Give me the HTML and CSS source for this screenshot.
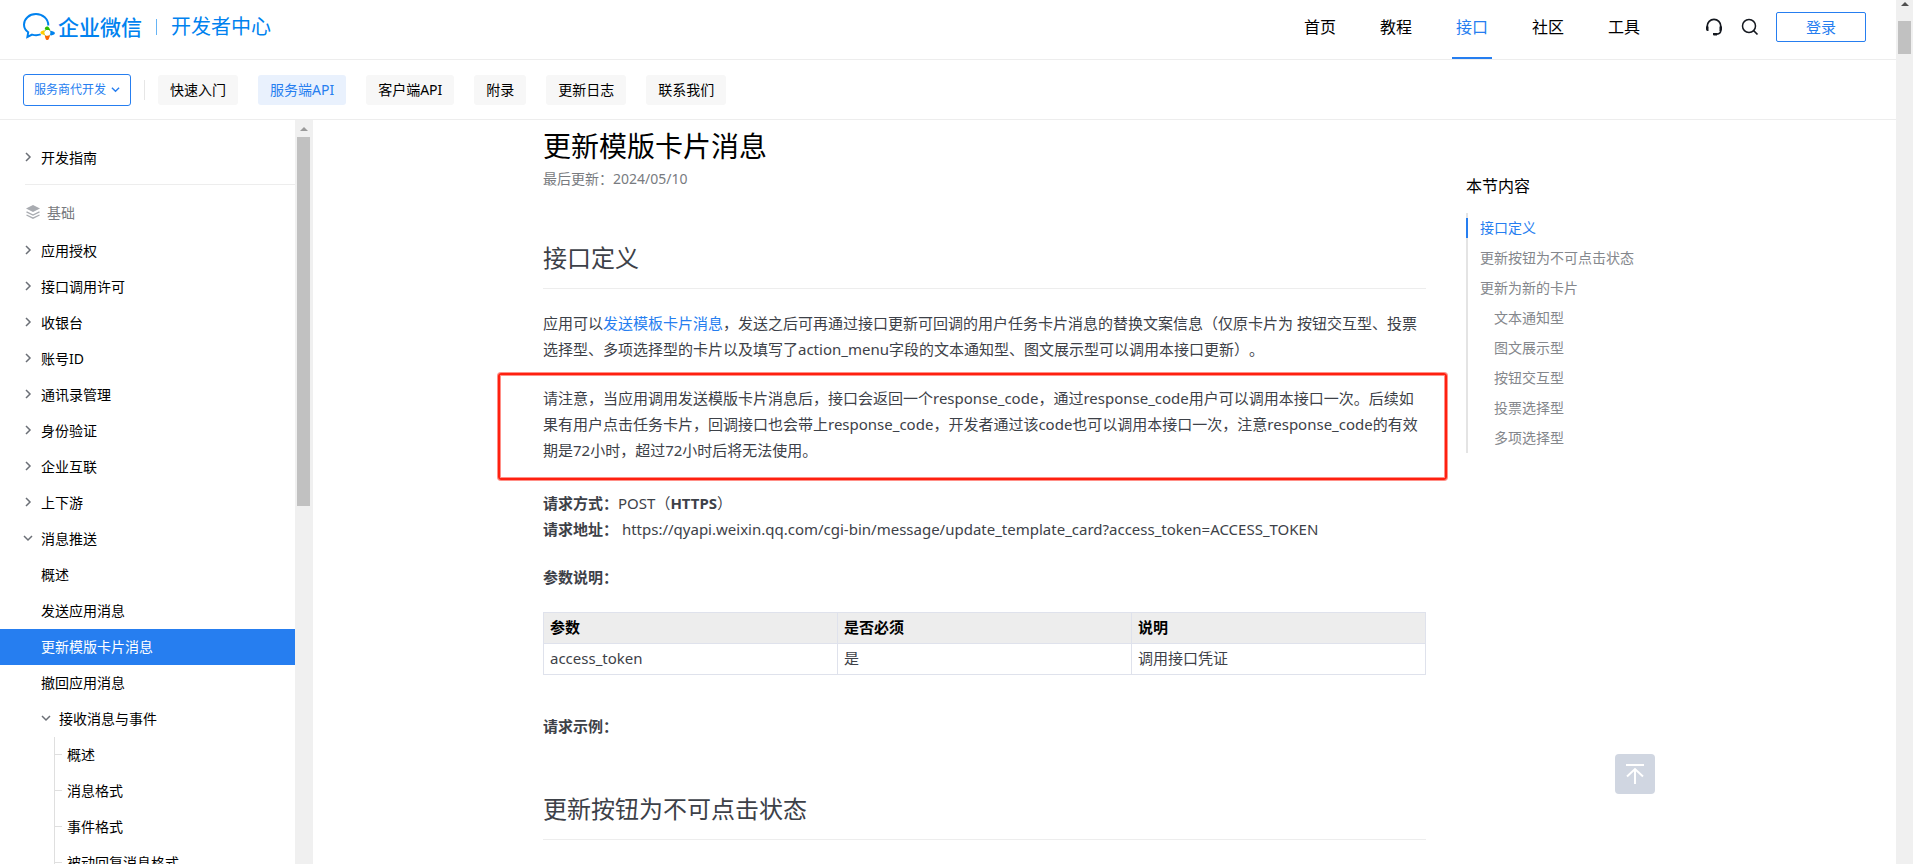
FILE: index.html
```html
<!DOCTYPE html>
<html lang="zh-CN">
<head>
    <meta charset="UTF-8">
    <meta name="viewport" content="width=device-width, initial-scale=1.0">
    <title>更新模版卡片消息 - 企业微信开发者中心</title>
    <link rel="stylesheet" href="styles.css">
</head>
<body>
    <svg class="symbols" aria-hidden="true">
        <symbol id="arrow-right" viewBox="0 0 10 10"><path d="M3 1l4 4-4 4" fill="none" stroke="currentColor" stroke-width="1.5"/></symbol>
        <symbol id="arrow-down" viewBox="0 0 10 10"><path d="M1 3l4 4 4-4" fill="none" stroke="currentColor" stroke-width="1.5"/></symbol>
    </svg>

    <div class="page">
        <header class="header">
            <a href="#" class="logo">
                <svg width="32" height="28" viewBox="0 0 32 28">
                    <path d="M25.3 12.4C25.3 6 19.8 1.1 13 1.1S1 5.8 1 11.5c0 3.4 1.6 6 4.2 7.8L4.400 24l4.700-2.400c3 .8 6 .7 8.600-.2" fill="none" stroke="#0082ef" stroke-width="2"/>
                    <path d="M24.5 15.5l4.5 4.3-4.7 4.7-4.6-4.7z" fill="#fff" stroke="#9dc36b" stroke-width="1"/>
                    <path d="M21.8 16.2c-.2-2.2 1.6-3.3 3.1-2.6 1.4.6 1.5 2.4 2.5 3.6-2-.8-3.6.5-5.6-1z" fill="#2dbc00"/>
                    <path d="M27.5 22.5c-.8-1.6.3-3.2-.2-5.1 1.8 1 4.3.6 4.6 2.6.1 1.8-2.500 2.200-4.400 2.500z" fill="#0082ef"/>
                    <path d="M21.8 22.7c1.8.6 3.5-.6 5.4.1-1.2 1.300-.8 4.100-2.700 4.300-2 .1-2.100-2.700-2.700-4.400z" fill="#fb6500"/>
                    <path d="M21.6 17.1c-.8 1.8.4 3.5.2 5.3-1.600-1-4.100-.7-4.300-2.600 0-1.800 2.500-1.900 4.100-2.700z" fill="#fc0"/>
                </svg>
                <span class="logo-name">企业微信</span>
                <span class="logo-sub">开发者中心</span>
            </a>
            <nav class="nav">
                <a href="#">首页</a>
                <a href="#">教程</a>
                <a href="#" class="active">接口</a>
                <a href="#">社区</a>
                <a href="#">工具</a>
            </nav>
            <div class="tools">
                <button type="button" class="icon-btn" aria-label="客服">
                    <svg width="18" height="18" viewBox="0 0 18 18">
                        <path d="M2.2 10V8.2a6.8 6.8 0 0 1 13.600 0V12c0 2.600-1.300 4-4 4.200" fill="none" stroke="#14181f" stroke-width="1.7"/>
                        <path d="M1 8.500h2.500v4.500H2.600C1.600 13 1 12.200 1 11zM17 8.500h-2.500v4.500h.9c1 0 1.600-.8 1.600-2zM8 15h4v2.400H8.800c-.6 0-.8-.4-.8-.9z" fill="#14181f"/>
                    </svg>
                </button>
                <button type="button" class="icon-btn" aria-label="搜索">
                    <svg width="18" height="18" viewBox="0 0 18 18">
                        <circle cx="8" cy="8" r="6.5" fill="none" stroke="#14181f" stroke-width="1.5"/>
                        <path d="M12.5 12.5l4 4" stroke="#14181f" stroke-width="1.7"/>
                    </svg>
                </button>
                <button type="button" class="login-btn">登录</button>
            </div>
        </header>

        <div class="sub-header">
            <div class="mode">
                <select aria-label="开发模式">
                    <option>服务商代开发</option>
                </select>
                <svg width="9" height="9"><use href="#arrow-down"/></svg>
            </div>
            <nav class="tabs">
                <a href="#">快速入门</a>
                <a href="#" class="active">服务端API</a>
                <a href="#">客户端API</a>
                <a href="#">附录</a>
                <a href="#">更新日志</a>
                <a href="#">联系我们</a>
            </nav>
        </div>

        <div class="body">
            <aside class="sidebar">
                <ul class="menu">
                    <li><a href="#"><svg><use href="#arrow-right"/></svg>开发指南</a></li>
                    <li class="group">
                        <svg width="14" height="14" viewBox="0 0 14 14">
                            <path d="M7 0l7 3.5L7 7 0 3.5z" fill="#a9acb1"/>
                            <path d="M.5 6.8L7 10l6.5-3.2M.5 10L7 13.2 13.5 10" fill="none" stroke="#a9acb1" stroke-width="1.3"/>
                        </svg>
                        基础
                    </li>
                    <li><a href="#"><svg><use href="#arrow-right"/></svg>应用授权</a></li>
                    <li><a href="#"><svg><use href="#arrow-right"/></svg>接口调用许可</a></li>
                    <li><a href="#"><svg><use href="#arrow-right"/></svg>收银台</a></li>
                    <li><a href="#"><svg><use href="#arrow-right"/></svg>账号ID</a></li>
                    <li><a href="#"><svg><use href="#arrow-right"/></svg>通讯录管理</a></li>
                    <li><a href="#"><svg><use href="#arrow-right"/></svg>身份验证</a></li>
                    <li><a href="#"><svg><use href="#arrow-right"/></svg>企业互联</a></li>
                    <li><a href="#"><svg><use href="#arrow-right"/></svg>上下游</a></li>
                    <li>
                        <a href="#"><svg><use href="#arrow-down"/></svg>消息推送</a>
                        <ul class="level2">
                            <li><a href="#">概述</a></li>
                            <li><a href="#">发送应用消息</a></li>
                            <li><a href="#" class="active">更新模版卡片消息</a></li>
                            <li><a href="#">撤回应用消息</a></li>
                            <li>
                                <a href="#"><svg><use href="#arrow-down"/></svg>接收消息与事件</a>
                                <ul class="level3">
                                    <li><a href="#">概述</a></li>
                                    <li><a href="#">消息格式</a></li>
                                    <li><a href="#">事件格式</a></li>
                                    <li><a href="#">被动回复消息格式</a></li>
                                </ul>
                            </li>
                        </ul>
                    </li>
                </ul>
                <div class="scrollbar side-scroll"><div class="thumb"></div></div>
            </aside>

            <main class="main">
                <article class="doc">
                    <h1>更新模版卡片消息</h1>
                    <div class="date">最后更新：2024/05/10</div>

                    <h2>接口定义</h2>
                    <p>应用可以<a href="#">发送模板卡片消息</a>，发送之后可再通过接口更新可回调的用户任务卡片消息的替换文案信息（仅原卡片为 按钮交互型、投票选择型、多项选择型的卡片以及填写了action_menu字段的文本通知型、图文展示型可以调用本接口更新）。</p>
                    <p class="mark">请注意，当应用调用发送模版卡片消息后，接口会返回一个response_code，通过response_code用户可以调用本接口一次。后续如果有用户点击任务卡片，回调接口也会带上response_code，开发者通过该code也可以调用本接口一次，注意response_code的有效期是72小时，超过72小时后将无法使用。</p>
                    <p><b>请求方式：</b>POST（<b>HTTPS</b>）<br>
                    <b>请求地址：</b> https://qyapi.weixin.qq.com/cgi-bin/message/update_template_card?access_token=ACCESS_TOKEN</p>
                    <p><b>参数说明：</b></p>
                    <table>
                        <thead>
                            <tr>
                                <th>参数</th>
                                <th>是否必须</th>
                                <th>说明</th>
                            </tr>
                        </thead>
                        <tbody>
                            <tr>
                                <td>access_token</td>
                                <td>是</td>
                                <td>调用接口凭证</td>
                            </tr>
                        </tbody>
                    </table>
                    <p><b>请求示例：</b></p>

                    <h2>更新按钮为不可点击状态</h2>
                </article>

                <aside class="toc">
                    <h3>本节内容</h3>
                    <ul>
                        <li><a href="#" class="active">接口定义</a></li>
                        <li><a href="#">更新按钮为不可点击状态</a></li>
                        <li><a href="#">更新为新的卡片</a></li>
                        <li class="sub"><a href="#">文本通知型</a></li>
                        <li class="sub"><a href="#">图文展示型</a></li>
                        <li class="sub"><a href="#">按钮交互型</a></li>
                        <li class="sub"><a href="#">投票选择型</a></li>
                        <li class="sub"><a href="#">多项选择型</a></li>
                    </ul>
                </aside>
            </main>
        </div>
    </div>

    <div class="scrollbar page-scroll"><div class="thumb"></div></div>

    <button type="button" class="back-top" aria-label="返回顶部">
        <svg width="18" height="20" viewBox="0 0 18 20">
            <path d="M0 1h18M9 20V5M1 12.5l8-7.5 8 7.5" fill="none" stroke="#fff" stroke-width="2"/>
        </svg>
    </button>
</body>
</html>
```
FILE: styles.css
```css
* {
    box-sizing: border-box;
}

body {
    margin: 0;
    height: 100vh;
    display: flex;
    overflow: hidden;
    background: #fff;
    color: #000;
    font-family: "Noto Sans", "Noto Sans CJK SC", sans-serif;
    font-size: 14px;
    text-spacing-trim: space-all;
}

a {
    color: inherit;
    text-decoration: none;
}

ul {
    list-style: none;
    margin: 0;
    padding: 0;
}

h1, h2, h3 {
    margin: 0;
    font-weight: normal;
}

button, select {
    font-family: inherit;
    cursor: pointer;
}

.symbols {
    display: none;
}

.page {
    flex: 1;
    min-width: 0;
    display: flex;
    flex-direction: column;
}

/* header */
.header {
    display: flex;
    align-items: center;
    flex: none;
    height: 60px;
    padding: 0 30px 0 23px;
    border-bottom: 1px solid #ededed;
}

.logo {
    display: flex;
    align-items: center;
    color: #0082ef;
    line-height: 24px;
    margin-top: -5px;
}

.logo-name {
    margin-left: 3px;
    font-size: 21px;
    font-weight: 500;
}

.logo-sub {
    display: flex;
    align-items: center;
    font-size: 20px;
}

.logo-sub::before {
    content: "";
    width: 1px;
    height: 16px;
    margin: 0 14px;
    background: #66b4f5;
}

.nav {
    display: flex;
    gap: 36px;
    margin-left: auto;
    margin-right: 61px;
}

.nav a {
    height: 59px;
    padding: 0 4px;
    font-size: 16px;
    line-height: 54px;
}

.nav a.active {
    color: #267ef0;
    border-bottom: 2px solid #267ef0;
}

.tools {
    display: flex;
    align-items: center;
    gap: 18px;
    margin-top: -5px;
}

.icon-btn {
    display: flex;
    padding: 0;
    border: none;
    background: none;
}

.login-btn {
    width: 90px;
    height: 30px;
    margin-left: -1px;
    padding: 0 0 2px;
    border: 1px solid #267ef0;
    border-radius: 2px;
    background: #fff;
    color: #267ef0;
    font-size: 15px;
}

/* second bar */
.sub-header {
    display: flex;
    align-items: center;
    flex: none;
    height: 60px;
    padding-left: 23px;
    border-bottom: 1px solid #ededed;
}

.mode {
    position: relative;
}

.mode select {
    appearance: none;
    display: block;
    width: 108px;
    height: 32px;
    padding: 0 10px;
    border: 1px solid #267ef0;
    border-radius: 3px;
    background: #fff;
    color: #267ef0;
    font-size: 12px;
}

.mode svg {
    position: absolute;
    right: 11px;
    top: 11px;
    color: #267ef0;
    pointer-events: none;
}

.tabs {
    display: flex;
    align-items: center;
    gap: 20px;
}

.tabs::before {
    content: "";
    width: 1px;
    height: 20px;
    margin: 0 -7px 0 13px;
    background: #e6e6e6;
}

.tabs a {
    padding: 0 12px;
    line-height: 30px;
    border-radius: 3px;
    background: #f7f7f7;
}

.tabs a.active {
    background: #e9f1fd;
    color: #267ef0;
}

.body {
    flex: 1;
    min-height: 0;
    display: flex;
}

/* sidebar */
.sidebar {
    flex: none;
    display: flex;
    width: 313px;
    overflow: hidden;
}

.menu {
    flex: 1;
    padding-top: 20px;
}

.menu a {
    display: flex;
    align-items: center;
    height: 36px;
    padding: 0 0 2px 23px;
}

.menu a svg {
    width: 10px;
    height: 10px;
    margin-right: 8px;
    color: #6b6f76;
}

.menu .group {
    display: flex;
    align-items: center;
    gap: 7px;
    height: 49px;
    margin: 8px 0 0 25px;
    padding: 6px 0 0 1px;
    border-top: 1px solid #ededed;
    color: #787b80;
}

.menu .level2 a {
    padding-left: 41px;
}

.menu .level2 a.active {
    background: #267ef0;
    color: #fff;
}

.menu .level3 {
    margin-left: 54px;
    border-left: 1px solid #dfdfdf;
}

.menu .level3 a {
    padding-left: 0;
}

.menu .level3 a::before {
    content: "";
    width: 7px;
    height: 1px;
    margin-right: 5px;
    background: #dfdfdf;
}

/* scroll bars */
.scrollbar {
    flex: none;
    background: #f0f0f0;
}

.scrollbar::before {
    content: "";
    display: block;
    width: 0;
    margin: 0 auto;
    border: 4px solid transparent;
    border-top: none;
    border-bottom-color: #9a9a9a;
}

.scrollbar .thumb {
    width: 13px;
    margin: 6px auto 0;
    background: #c1c1c1;
}

.side-scroll {
    width: 18px;
    padding: 7px 1px 0 0;
}

.side-scroll .thumb {
    height: 50%;
}

.page-scroll {
    width: 17px;
    padding-top: 2px;
}

.page-scroll::before {
    border-bottom-color: #505050;
}

.page-scroll .thumb {
    height: 33px;
    margin-top: 15px;
}

/* content */
.main {
    flex: 1;
    min-width: 0;
    display: flex;
    justify-content: center;
    gap: 40px;
    overflow: hidden;
}

.doc {
    flex: 0 1 883px;
    padding-top: 6px;
    color: #3d4148;
    font-size: 15px;
    line-height: 26px;
}

.doc h1 {
    color: #000;
    font-size: 28px;
    line-height: 40px;
}

.doc .date {
    margin-bottom: 48px;
    color: #787b80;
    font-size: 14px;
}

.doc h2 {
    padding-bottom: 12px;
    border-bottom: 1px solid #ededed;
    font-size: 24px;
    line-height: 36px;
}

.doc p {
    margin: 22px 0;
}

.doc h2 + p {
    margin-top: 21px;
}

.doc p a {
    color: #267ef0;
}

.doc .mark {
    margin: -11px -21px -12px -45px;
    padding: 10px 19px 15px 43px;
    border: 2px solid #ff2010;
    border-radius: 3px;
    box-shadow: 0 0 0 1px #ff9088, inset 0 0 0 1px #ff9088;
}

.doc table {
    width: 100%;
    margin-bottom: 38px;
    border-collapse: collapse;
    table-layout: fixed;
}

.doc th, .doc td {
    height: 31px;
    padding: 0 6px 2px;
    border: 1px solid #dfe2ec;
    text-align: left;
}

.doc th {
    background: #ededed;
    color: #000;
}

.doc table + p {
    margin-bottom: 52px;
}

.toc {
    flex: none;
    width: 200px;
    padding-top: 54px;
}

.toc h3 {
    margin-bottom: 15px;
    font-size: 16px;
    line-height: 24px;
}

.toc ul {
    border-left: 2px solid #e4e4e4;
}

.toc li {
    padding: 5px 0;
    margin-left: -2px;
}

.toc a {
    display: block;
    padding-left: 14px;
    color: #84878c;
    line-height: 20px;
}

.toc .sub a {
    padding-left: 28px;
}

.toc a.active {
    padding-left: 12px;
    border-left: 2px solid #267ef0;
    color: #267ef0;
}

.back-top {
    position: fixed;
    right: 258px;
    bottom: 70px;
    display: flex;
    align-items: center;
    justify-content: center;
    width: 40px;
    height: 40px;
    padding: 0;
    border: none;
    border-radius: 4px;
    background: #d0d6e1;
}
```
